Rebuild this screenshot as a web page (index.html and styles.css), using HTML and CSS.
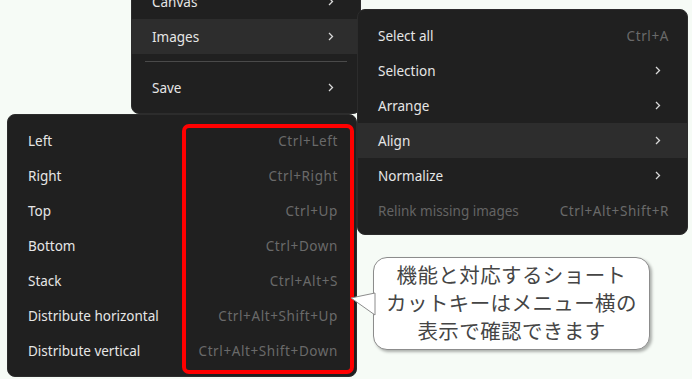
FILE: index.html
```
<!DOCTYPE html>
<html lang="ja">
<head>
    <meta charset="UTF-8">
    <title>Align menu</title>
    <link rel="stylesheet" href="styles.css">
</head>
<body>
    <div class="stage">
        <!-- main menu (scrolled past the top) -->
        <div class="menu menu-main">
            <div class="item"><span class="label">Canvas</span><span class="chev"><svg width="6" height="9" viewBox="0 0 6 9"><polyline points="1,1 4.5,4.5 1,8"/></svg></span></div>
            <div class="item hover"><span class="label">Images</span><span class="chev"><svg width="6" height="9" viewBox="0 0 6 9"><polyline points="1,1 4.5,4.5 1,8"/></svg></span></div>
            <div class="sep"></div>
            <div class="item"><span class="label">Save</span><span class="chev"><svg width="6" height="9" viewBox="0 0 6 9"><polyline points="1,1 4.5,4.5 1,8"/></svg></span></div>
        </div>

        <!-- Images submenu -->
        <div class="menu menu-images">
            <div class="item"><span class="label">Select all</span><span class="keys">Ctrl+A</span></div>
            <div class="item"><span class="label">Selection</span><span class="chev"><svg width="6" height="9" viewBox="0 0 6 9"><polyline points="1,1 4.5,4.5 1,8"/></svg></span></div>
            <div class="item"><span class="label">Arrange</span><span class="chev"><svg width="6" height="9" viewBox="0 0 6 9"><polyline points="1,1 4.5,4.5 1,8"/></svg></span></div>
            <div class="item hover"><span class="label">Align</span><span class="chev"><svg width="6" height="9" viewBox="0 0 6 9"><polyline points="1,1 4.5,4.5 1,8"/></svg></span></div>
            <div class="item"><span class="label">Normalize</span><span class="chev"><svg width="6" height="9" viewBox="0 0 6 9"><polyline points="1,1 4.5,4.5 1,8"/></svg></span></div>
            <div class="item disabled"><span class="label">Relink missing images</span><span class="keys">Ctrl+Alt+Shift+R</span></div>
        </div>

        <!-- Align submenu -->
        <div class="menu menu-align">
            <div class="item"><span class="label">Left</span><span class="keys">Ctrl+Left</span></div>
            <div class="item"><span class="label">Right</span><span class="keys">Ctrl+Right</span></div>
            <div class="item"><span class="label">Top</span><span class="keys">Ctrl+Up</span></div>
            <div class="item"><span class="label">Bottom</span><span class="keys">Ctrl+Down</span></div>
            <div class="item"><span class="label">Stack</span><span class="keys">Ctrl+Alt+S</span></div>
            <div class="item"><span class="label">Distribute horizontal</span><span class="keys">Ctrl+Alt+Shift+Up</span></div>
            <div class="item"><span class="label">Distribute vertical</span><span class="keys">Ctrl+Alt+Shift+Down</span></div>
        </div>

        <!-- annotation -->
        <div class="mark"></div>
        <div class="callout">
            <svg class="tail" width="26" height="30" viewBox="0 0 26 30"><polygon points="25,1 1,6 25,23"/></svg>
            <p>機能と対応するショート<br>カットキーはメニュー横の<br>表示で確認できます</p>
        </div>
    </div>
</body>
</html>
```

FILE: styles.css
```
body {
    margin: 0;
    background-color: #f6fbf6;
    font-family: 'Noto Sans', 'Open Sans', sans-serif;
    font-size: 13.5px;
    overflow: hidden;
}
.stage {
    position: relative;
    width: 692px;
    height: 379px;
}
.menu {
    position: absolute;
    box-sizing: border-box;
    background: #202020;
    border: 1px solid #2c2c2c;
    border-radius: 8px;
    color: #e6e6e6;
}
.menu-main {
    left: 131px;
    top: -25px;
    width: 230px;
    padding: 8px 0 8px;
    z-index: 1;
}
.menu-images {
    left: 357px;
    top: 9px;
    width: 331px;
    height: 226px;
    padding: 8px 0;
    z-index: 2;
}
.menu-align {
    left: 7px;
    top: 114px;
    width: 350px;
    height: 263px;
    padding: 8px 0;
    z-index: 3;
}
.item {
    display: flex;
    align-items: center;
    justify-content: space-between;
    height: 35px;
    padding: 0 20px;
}
.item.hover {
    background: #2d2d2d;
}
.keys {
    color: #6a6a6a;
    letter-spacing: 0.6px;
    margin-right: -2px;
}
.disabled .label {
    color: #646464;
}
.chev {
    display: flex;
    margin-right: 6px;
}
.chev polyline {
    fill: none;
    stroke: #d8d8d8;
    stroke-width: 1.3;
}
.sep {
    height: 1px;
    margin: 7px 13px 8px;
    background: #4a4a4a;
}
.mark {
    position: absolute;
    left: 182px;
    top: 124px;
    width: 172px;
    height: 250px;
    box-sizing: border-box;
    border: 4px solid #ff0000;
    border-radius: 7px;
    z-index: 4;
}
.callout {
    position: absolute;
    left: 373px;
    top: 257px;
    width: 277px;
    height: 93px;
    box-sizing: border-box;
    background: #fff;
    border: 1px solid #8c8c8c;
    border-radius: 14px;
    box-shadow: 2px 2px 3px rgba(0, 0, 0, 0.3);
    z-index: 5;
}
.tail {
    position: absolute;
    left: -24px;
    top: 34px;
}
.tail polygon {
    fill: #fff;
    stroke: #8c8c8c;
    stroke-width: 1;
}
.callout p {
    position: relative;
    margin: 0;
    padding-top: 2px;
    font-family: 'Noto Sans CJK JP', sans-serif;
    font-size: 20.5px;
    line-height: 28px;
    color: #454545;
    text-align: center;
    letter-spacing: 0.4px;
}
```
